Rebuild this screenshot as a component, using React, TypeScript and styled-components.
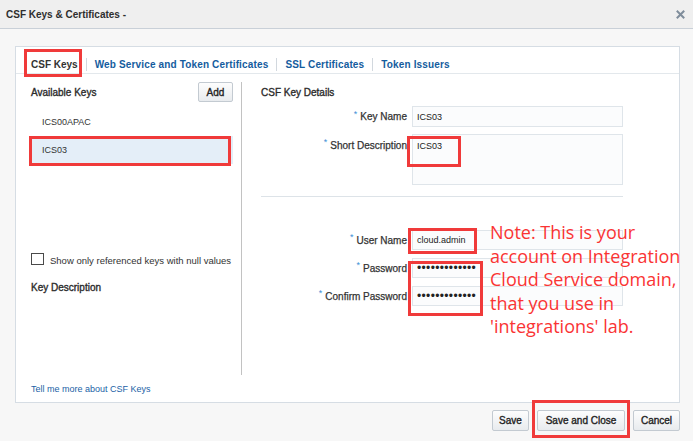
import React from "react";
import styled, { createGlobalStyle } from "styled-components";

const Global = createGlobalStyle`
  html, body { margin: 0; padding: 0; }
  body {
    background: #f7f7f7;
    font-family: "Liberation Sans", Arial, sans-serif;
    color: #333;
  }
  * { box-sizing: border-box; }
`;

const Dialog = styled.div`
  position: relative;
  width: 693px;
  height: 441px;
  display: flex;
  flex-direction: column;
  background: #f7f7f7;
  overflow: hidden;
`;

const TitleBar = styled.div`
  height: 29px;
  flex: none;
  display: flex;
  align-items: center;
  justify-content: space-between;
  padding: 0 8px 0 6px;
  background: #efefef;
  border-bottom: 1px solid #c9d0d8;
`;

const Title = styled.div`
  font-size: 10px;
  font-weight: bold;
  color: #2e2e2e;
`;

const Close = styled.button`
  border: 0;
  padding: 0;
  background: none;
  width: 9px;
  height: 9px;
  display: flex;
  cursor: pointer;
`;

const Main = styled.div`
  padding: 17px 13px 0 15px;
`;

const Panel = styled.div`
  height: 357px;
  display: flex;
  flex-direction: column;
  background: #fff;
  border: 1px solid #d6dde4;
`;

const TabStrip = styled.div`
  height: 27px;
  flex: none;
  display: flex;
  align-items: center;
  padding: 8px 0 0 7px;
  border-bottom: 1px solid #e3e8ec;
`;

const Tab = styled.div<{ $active?: boolean }>`
  padding: 0 8px;
  font-size: 10px;
  font-weight: bold;
  letter-spacing: ${(p) => (p.$active ? "0" : "0.15px")};
  color: ${(p) => (p.$active ? "#333" : "#145c9e")};
  cursor: pointer;
`;

const TabSep = styled.span`
  width: 1px;
  height: 13px;
  background: #d2d8de;
`;

const Body = styled.div`
  flex: 1;
  display: flex;
`;

const LeftCol = styled.div`
  width: 225px;
  flex: none;
  display: flex;
  flex-direction: column;
  padding: 8px 8px 0 15px;
`;

const HeaderRow = styled.div`
  height: 20px;
  display: flex;
  align-items: center;
  justify-content: space-between;
`;

const Heading = styled.div`
  font-size: 10px;
  color: #2b2b2b;
  -webkit-text-stroke: 0.35px #2b2b2b;
`;

const Button = styled.button<{ $w: number }>`
  width: ${(p) => p.$w}px;
  height: 21px;
  padding: 0;
  font-family: "Liberation Sans", Arial, sans-serif;
  font-size: 10px;
  color: #222;
  -webkit-text-stroke: 0.35px #222;
  background: linear-gradient(#fdfdfd, #e8ebee);
  border: 1px solid #c3cad1;
  border-radius: 2px;
  cursor: pointer;
`;

const SmallButton = styled(Button)`
  height: 20px;
`;

const KeyList = styled.div`
  margin: 6px 0 0 -1px;
  display: flex;
  flex-direction: column;
`;

const KeyRow = styled.div<{ $selected?: boolean }>`
  height: 28px;
  display: flex;
  align-items: center;
  padding-left: 12px;
  font-size: 9px;
  color: #333;
  background: ${(p) => (p.$selected ? "#e4eef8" : "transparent")};
`;

const CheckRow = styled.label`
  margin-top: 89px;
  height: 14px;
  display: flex;
  align-items: center;
  font-size: 9.5px;
  color: #333;
`;

const CheckBox = styled.span`
  width: 13px;
  height: 12px;
  border: 1px solid #4a4a4a;
  background: #fff;
  margin-right: 6px;
  margin-top: -3px;
`;

const KeyDesc = styled(Heading)`
  margin-top: 15px;
`;

const Divider = styled.div`
  width: 1px;
  margin-top: 8px;
  background: #c2c2c2;
`;

const RightCol = styled.div`
  flex: 1;
  padding: 8px 0 0 19px;
  display: flex;
  flex-direction: column;
`;

const Form = styled.div`
  margin-top: 4px;
  display: grid;
  grid-template-columns: 146px 211px;
  column-gap: 5px;
`;

const Label = styled.div<{ $top?: boolean; $mt?: number }>`
  display: flex;
  justify-content: flex-end;
  align-items: ${(p) => (p.$top ? "flex-start" : "center")};
  padding-top: ${(p) => (p.$top ? "6px" : "0")};
  margin-top: ${(p) => p.$mt ?? 0}px;
  font-size: 10px;
  color: #333;
  -webkit-text-stroke: 0.25px #333;
  white-space: nowrap;
`;

const Star = styled.span`
  color: #3d8fd6;
  font-size: 9px;
  margin-right: 3px;
  position: relative;
  top: -3px;
  -webkit-text-stroke: 0;
`;

const Field = styled.div<{ $h: number; $mt?: number }>`
  height: ${(p) => p.$h}px;
  margin-top: ${(p) => p.$mt ?? 0}px;
  display: flex;
  align-items: ${(p) => (p.$h > 30 ? "flex-start" : "center")};
  padding: ${(p) => (p.$h > 30 ? "6px 4px 0" : "0 4px")};
  background: #fbfcfd;
  border: 1px solid #dfe5ea;
  font-size: 9px;
  color: #222;
`;

const Dots = styled.span`
  font-size: 12px;
  letter-spacing: 0.35px;
  line-height: 1;
  color: #222;
`;

const Separator = styled.div`
  grid-column: 1 / 3;
  height: 1px;
  margin-top: 11px;
  background: #dde3e8;
`;

const Footer = styled.div`
  height: 27px;
  flex: none;
  display: flex;
  align-items: center;
  padding-left: 15px;
`;

const Link = styled.a`
  font-size: 9px;
  color: #1b5fa6;
  text-decoration: none;
  cursor: pointer;
`;

const ButtonBar = styled.div`
  margin-top: 7px;
  display: flex;
  justify-content: flex-end;
  gap: 8px;
`;

const Mark = styled.div<{ $x: number; $y: number; $w: number; $h: number }>`
  position: absolute;
  left: ${(p) => p.$x}px;
  top: ${(p) => p.$y}px;
  width: ${(p) => p.$w}px;
  height: ${(p) => p.$h}px;
  border: 3px solid #f03a3a;
  pointer-events: none;
`;

const Note = styled.div`
  position: absolute;
  left: 490px;
  top: 221px;
  font-family: "Open Sans", "Noto Sans", sans-serif;
  font-size: 18px;
  line-height: 23.5px;
  color: #fa3434;
  white-space: nowrap;
`;

const FormRow = ({
  label,
  children,
  top,
  mt,
}: {
  label: string;
  children: React.ReactNode;
  top?: boolean;
  mt?: number;
}) => (
  <>
    <Label $top={top} $mt={mt}>
      <Star>*</Star>
      {label}
    </Label>
    {children}
  </>
);

const dots = "•".repeat(13);

export default function App() {
  return (
    <>
      <Global />
      <Dialog>
        <TitleBar>
          <Title>CSF Keys &amp; Certificates -</Title>
          <Close aria-label="Close">
            <svg width="9" height="9" viewBox="0 0 9 9">
              <path d="M1.5 1.5 L7.5 7.5 M7.5 1.5 L1.5 7.5" stroke="#7f8d9b" strokeWidth="2" strokeLinecap="square" />
            </svg>
          </Close>
        </TitleBar>
        <Main>
          <Panel>
            <TabStrip>
              <Tab $active>CSF Keys</Tab>
              <TabSep />
              <Tab>Web Service and Token Certificates</Tab>
              <TabSep />
              <Tab>SSL Certificates</Tab>
              <TabSep />
              <Tab>Token Issuers</Tab>
            </TabStrip>
            <Body>
              <LeftCol>
                <HeaderRow>
                  <Heading>Available Keys</Heading>
                  <SmallButton $w={35}>Add</SmallButton>
                </HeaderRow>
                <KeyList>
                  <KeyRow>ICS00APAC</KeyRow>
                  <KeyRow $selected>ICS03</KeyRow>
                </KeyList>
                <CheckRow>
                  <CheckBox />
                  Show only referenced keys with null values
                </CheckRow>
                <KeyDesc>Key Description</KeyDesc>
              </LeftCol>
              <Divider />
              <RightCol>
                <HeaderRow>
                  <Heading>CSF Key Details</Heading>
                </HeaderRow>
                <Form>
                  <FormRow label="Key Name">
                    <Field $h={21}>ICS03</Field>
                  </FormRow>
                  <FormRow label="Short Description" top mt={7}>
                    <Field $h={51} $mt={7}>ICS03</Field>
                  </FormRow>
                  <Separator />
                  <FormRow label="User Name" mt={33}>
                    <Field $h={20} $mt={33}>cloud.admin</Field>
                  </FormRow>
                  <FormRow label="Password" mt={8}>
                    <Field $h={20} $mt={8}>
                      <Dots>{dots}</Dots>
                    </Field>
                  </FormRow>
                  <FormRow label="Confirm Password" mt={8}>
                    <Field $h={20} $mt={8}>
                      <Dots>{dots}</Dots>
                    </Field>
                  </FormRow>
                </Form>
              </RightCol>
            </Body>
            <Footer>
              <Link>Tell me more about CSF Keys</Link>
            </Footer>
          </Panel>
          <ButtonBar>
            <Button $w={37}>Save</Button>
            <Button $w={88}>Save and Close</Button>
            <Button $w={47}>Cancel</Button>
          </ButtonBar>
        </Main>
        <Mark $x={24} $y={49} $w={58} $h={28} />
        <Mark $x={29} $y={136} $w={202} $h={30} />
        <Mark $x={407} $y={136} $w={54} $h={31} />
        <Mark $x={408} $y={228} $w={69} $h={26} />
        <Mark $x={408} $y={261} $w={75} $h={55} />
        <Mark $x={532} $y={400} $w={98} $h={38} />
        <Note>
          Note: This is your
          <br />
          account on Integration
          <br />
          Cloud Service domain,
          <br />
          that you use in
          <br />
          'integrations' lab.
        </Note>
      </Dialog>
    </>
  );
}
